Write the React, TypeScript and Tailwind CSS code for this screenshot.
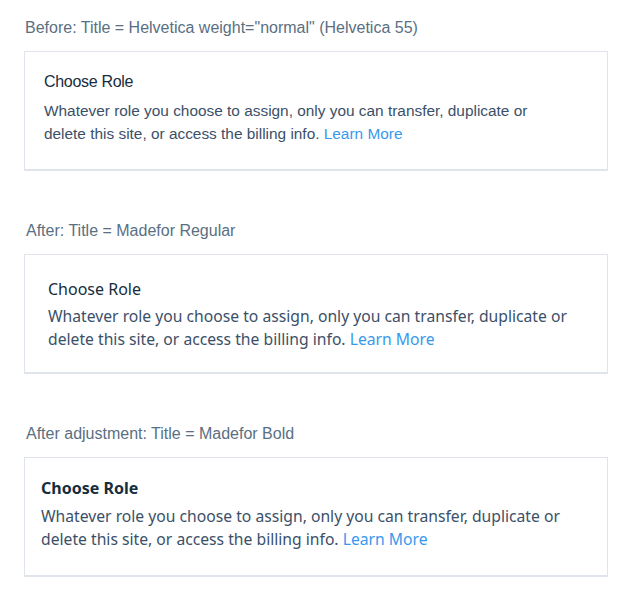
import React from 'react';

type Variant = {
    label: string;
    labelPad: string;
    cardPad: string;
    titleClass: string;
    bodyClass: string;
};

const variants: Variant[] = [
    {
        label: 'Before: Title = Helvetica weight="normal" (Helvetica 55)',
        labelPad: 'pl-[25px]',
        cardPad: 'pt-[18px] pl-[19px]',
        titleClass: "font-['Liberation_Sans',Arial,sans-serif] font-normal tracking-[-0.3px] mb-[5px]",
        bodyClass: "font-['Liberation_Sans',Arial,sans-serif] text-[15.4px]",
    },
    {
        label: 'After: Title = Madefor Regular',
        labelPad: 'pl-[26px]',
        cardPad: 'pt-[22px] pl-[23px]',
        titleClass: "font-['Noto_Sans',sans-serif] font-normal mb-[4px]",
        bodyClass: "font-['Noto_Sans',sans-serif] text-[15.7px]",
    },
    {
        label: 'After adjustment: Title = Madefor Bold',
        labelPad: 'pl-[26px]',
        cardPad: 'pt-[18px] pl-[16px]',
        titleClass: "font-['Noto_Sans',sans-serif] font-bold mb-[5px]",
        bodyClass: "font-['Noto_Sans',sans-serif] text-[15.7px]",
    },
];

const RoleCard = ({ v }: { v: Variant }) => (
    <div className={`h-[120px] w-[584px] ml-[24px] bg-white border border-[#dfe5eb] border-b-2 ${v.cardPad}`}>
        <div className={`text-[16px] leading-[24px] text-[#162d3d] ${v.titleClass}`}>Choose Role</div>
        <p className={`leading-[23px] text-[#3b5068] ${v.bodyClass}`}>
            Whatever role you choose to assign, only you can transfer, duplicate or
            <br />
            delete this site, or access the billing info.{' '}
            <span className="text-[#3899ec]">Learn More</span>
        </p>
    </div>
);

export default function App() {
    return (
        <div className="w-[631px] h-[600px] bg-white pt-4">
            {variants.map((v, i) => (
                <div key={i} className={i > 0 ? 'mt-[48px]' : ''}>
                    <div className={`text-[16px] leading-[24px] text-[#5a6f82] font-['Liberation_Sans',Arial,sans-serif] mb-[11px] ${v.labelPad}`}>
                        {v.label}
                    </div>
                    <RoleCard v={v} />
                </div>
            ))}
        </div>
    );
}
